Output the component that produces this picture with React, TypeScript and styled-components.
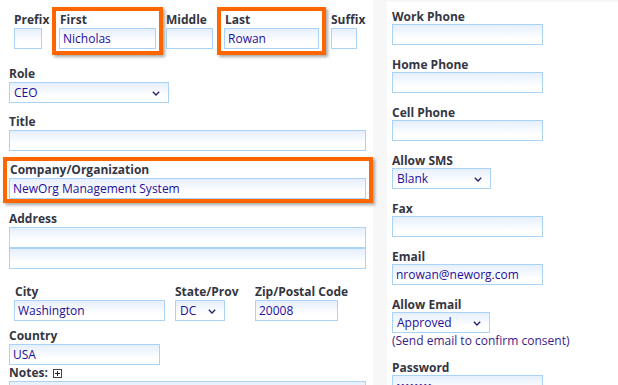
import React from 'react';
import styled, { createGlobalStyle } from 'styled-components';

const GlobalStyle = createGlobalStyle`
  html, body {
    margin: 0;
    padding: 0;
    background: #f7f7f7;
    font-family: "Open Sans", "DejaVu Sans", sans-serif;
    font-size: 12px;
  }
`

const Page = styled.div`
  display: flex;
  align-items: flex-start;
  width: 618px;
  height: 385px;
  overflow: hidden;
`

const LeftPanel = styled.div`
  width: 373px;
  height: 385px;
  box-sizing: border-box;
  background: #fff;
  padding: 0 7px 0 9px;
  display: flex;
  flex-direction: column;
`

const RightPanel = styled.div`
  flex: 1;
  height: 383px;
  margin: 2px 0 0 14px;
  background: #fff;
  padding: 7px 0 0 5px;
  display: flex;
  flex-direction: column;
  gap: 12px;
`

const NameRow = styled.div`
  display: flex;
  align-items: flex-start;
  padding: 7px 0 0 5px;
`

const Cell = styled.div<{ $hl?: boolean; $w?: number; $ml?: number }>`
  display: flex;
  flex-direction: column;
  flex-shrink: 0;
  ${p => (p.$w ? `width: ${p.$w}px;` : '')}
  margin-left: ${p => p.$ml ?? 0}px;
  ${p =>
    p.$hl
      ? `
    border: 4px solid #ff6600;
    padding: 1px 3px 2px;
    box-shadow: 2px 2px 3px rgba(0, 0, 0, 0.35);
  `
      : `
    padding-top: 5px;
  `}
`

const WideHighlight = styled.div`
  display: flex;
  flex-direction: column;
  margin: 6px -7px 0 -6px;
  border: 4px solid #ff6600;
  padding: 1px 3px 0 2px;
  box-shadow: 2px 2px 3px rgba(0, 0, 0, 0.35);
`

const Field = styled.div<{ $mt?: number; $w?: number }>`
  display: flex;
  flex-direction: column;
  margin-top: ${p => p.$mt ?? 0}px;
  ${p => (p.$w ? `width: ${p.$w}px;` : '')}
`

const Label = styled.label<{ $pl?: number }>`
  display: block;
  font-weight: 700;
  font-size: 12px;
  line-height: 16px;
  color: #343643;
  white-space: nowrap;
  padding-left: ${p => p.$pl ?? 0}px;
`

const RightLabel = styled(Label)`
  line-height: 15px;
`

const Input = styled.input<{ $w?: number }>`
  box-sizing: border-box;
  width: ${p => (p.$w ? `${p.$w}px` : '100%')};
  height: 21px;
  margin: 0;
  border: 1px solid #a9d3f7;
  border-radius: 0;
  background: linear-gradient(to bottom, #e6effc 0%, #ffffff 70%);
  padding: 0 3px;
  font-family: "Open Sans", "DejaVu Sans", sans-serif;
  font-size: 12px;
  color: #1f0f99;
  outline: none;
`

const SelectBox = styled.div<{ $w: number }>`
  position: relative;
  box-sizing: border-box;
  width: ${p => p.$w}px;
  height: 21px;
  border: 1px solid #a9d3f7;
  background: linear-gradient(to bottom, #e6effc 0%, #ffffff 70%);
  display: flex;
  align-items: center;
  padding: 0 4px;
  font-size: 12px;
  color: #1f0f99;
`

const Chevron = styled.svg`
  position: absolute;
  right: 8px;
  top: 8px;
`

const NameCells = styled.div`
  display: flex;
  align-items: flex-start;
`

const CityRow = styled.div`
  display: flex;
  align-items: flex-start;
  padding-left: 5px;
  margin-top: 15px;
`

const Consent = styled.div`
  font-size: 12px;
  line-height: 15px;
  color: #3a1a8c;
  white-space: nowrap;
`

const NotesLabel = styled(Label)`
  display: flex;
  align-items: center;
  gap: 5px;
`

const PlusBox = styled.span`
  width: 9px;
  height: 9px;
  box-sizing: border-box;
  border: 1px solid #444;
  position: relative;
  &::before, &::after {
    content: '';
    position: absolute;
    background: #222;
  }
  &::before { left: 1px; right: 1px; top: 3px; height: 1px; }
  &::after { top: 1px; bottom: 1px; left: 3px; width: 1px; }
`

const Select = ({ value, w }: { value: string; w: number }) => (
  <SelectBox $w={w}>
    {value}
    <Chevron width="8" height="5" viewBox="0 0 8 5">
      <path d="M0.8 0.8 L4 4 L7.2 0.8" fill="none" stroke="#1f1f6a" strokeWidth="1.3" />
    </Chevron>
  </SelectBox>
)

const RightField = ({ label, children }: { label: string; children: React.ReactNode }) => (
  <Field>
    <RightLabel>{label}</RightLabel>
    {children}
  </Field>
)

export default function App() {
  return (
    <Page>
      <GlobalStyle />
      <LeftPanel>
        <NameRow>
          <NameCells>
            <Cell $w={38}>
              <Label>Prefix</Label>
              <Input $w={28} />
            </Cell>
            <Cell $hl>
              <Label $pl={1}>First</Label>
              <Input $w={97} defaultValue="Nicholas" />
            </Cell>
            <Cell $w={51} $ml={3}>
              <Label>Middle</Label>
              <Input $w={47} />
            </Cell>
            <Cell $hl>
              <Label $pl={1}>Last</Label>
              <Input $w={95} defaultValue="Rowan" />
            </Cell>
            <Cell $ml={5}>
              <Label>Suffix</Label>
              <Input $w={26} />
            </Cell>
          </NameCells>
        </NameRow>

        <Field $mt={11}>
          <Label>Role</Label>
          <Select value="CEO" w={160} />
        </Field>

        <Field $mt={11}>
          <Label>Title</Label>
          <Input />
        </Field>

        <WideHighlight>
          <Label $pl={1}>Company/Organization</Label>
          <Input defaultValue="NewOrg Management System" />
        </WideHighlight>

        <Field $mt={8}>
          <Label>Address</Label>
          <Input />
          <Input />
        </Field>

        <CityRow>
          <Field $w={161}>
            <Label $pl={1}>City</Label>
            <Input $w={151} defaultValue="Washington" />
          </Field>
          <Field $w={80}>
            <Label>State/Prov</Label>
            <Select value="DC" w={50} />
          </Field>
          <Field>
            <Label>Zip/Postal Code</Label>
            <Input $w={83} defaultValue="20008" />
          </Field>
        </CityRow>

        <Field $mt={7}>
          <Label>Country</Label>
          <Input $w={151} defaultValue="USA" />
        </Field>

        <Field>
          <NotesLabel>
            Notes: <PlusBox />
          </NotesLabel>
          <Input />
        </Field>
      </LeftPanel>

      <RightPanel>
        <RightField label="Work Phone">
          <Input $w={151} />
        </RightField>
        <RightField label="Home Phone">
          <Input $w={151} />
        </RightField>
        <RightField label="Cell Phone">
          <Input $w={151} />
        </RightField>
        <RightField label="Allow SMS">
          <Select value="Blank" w={99} />
        </RightField>
        <RightField label="Fax">
          <Input $w={151} />
        </RightField>
        <RightField label="Email">
          <Input $w={151} defaultValue="nrowan@neworg.com" />
        </RightField>
        <RightField label="Allow Email">
          <Select value="Approved" w={98} />
          <Consent>(Send email to confirm consent)</Consent>
        </RightField>
        <RightField label="Password">
          <Input $w={151} type="password" defaultValue="password" />
        </RightField>
      </RightPanel>
    </Page>
  );
}
